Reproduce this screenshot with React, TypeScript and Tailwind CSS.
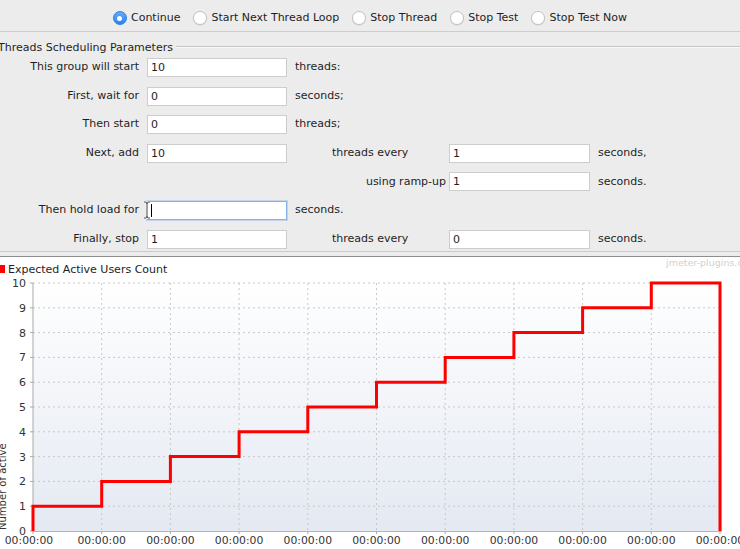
import React from "react";

// radio options on the top bar
const options = [
  { label: "Continue", checked: true },
  { label: "Start Next Thread Loop", checked: false },
  { label: "Stop Thread", checked: false },
  { label: "Stop Test", checked: false },
  { label: "Stop Test Now", checked: false },
];

function Radio({ label, checked }: { label: string; checked: boolean }) {
  return (
    <div className="flex items-center gap-[4px]">
      {checked ? (
        <span className="w-[14px] h-[14px] rounded-full bg-gradient-to-b from-[#63a9fb] to-[#2a83f3] border border-[#2f7fe0] flex items-center justify-center">
          <span className="w-[5px] h-[5px] rounded-full bg-white" />
        </span>
      ) : (
        <span className="w-[14px] h-[14px] rounded-full bg-white border border-[#c4c4c4] shadow-[0_0.5px_1px_rgba(0,0,0,0.12)]" />
      )}
      <span>{label}</span>
    </div>
  );
}

function Field({ value, focused }: { value?: string; focused?: boolean }) {
  return (
    <div
      className={
        "h-[19px] bg-white border px-[3px] leading-[17px] relative " +
        (focused ? "border-[#86b0ea] shadow-[0_0_0_1px_rgba(120,165,230,0.35)]" : "border-[#cdcdcd]")
      }
    >
      {value}
      {focused && (
        <>
          <span className="absolute left-[3px] top-[2px] w-px h-[13px] bg-black" />
          {/* mouse I-beam cursor */}
          <svg className="absolute -left-[5px] -top-[2px]" width="8" height="20" viewBox="0 0 8 20">
            <path d="M1 2 H3 Q4 2 4 4 V16 Q4 18 3 18 H1 M7 2 H5 Q4 2 4 4 M4 16 Q4 18 5 18 H7" fill="none" stroke="#fff" strokeWidth="2.2" />
            <path d="M1 2 H3 Q4 2 4 4 V16 Q4 18 3 18 H1 M7 2 H5 Q4 2 4 4 M4 16 Q4 18 5 18 H7" fill="none" stroke="#444" strokeWidth="1" />
          </svg>
        </>
      )}
    </div>
  );
}

// chart geometry (svg coords, chart starts at page y=257)
const X0 = 33;
const XSTEP = 68.7;
const Y0 = 274;
const YSTEP = 24.8;
const PLOT_RIGHT = 722;

function yOf(v: number) {
  return Y0 - v * YSTEP;
}

function Chart() {
  let d = `M${X0},${Y0} V${yOf(1)}`;
  for (let k = 1; k <= 9; k++) {
    d += ` H${X0 + XSTEP * k} V${yOf(k + 1)}`;
  }
  d += ` H${X0 + XSTEP * 10} V${Y0}`;

  const xs = Array.from({ length: 11 }, (_, i) => X0 + XSTEP * i);
  const ys = Array.from({ length: 11 }, (_, i) => i);

  return (
    <svg width="740" height="292" viewBox="0 0 740 292" className="block">
      <defs>
        <linearGradient id="plotbg" x1="0" y1="0" x2="0" y2="1">
          <stop offset="0" stopColor="#ffffff" />
          <stop offset="1" stopColor="#e4e9f2" />
        </linearGradient>
      </defs>
      <rect x="0" y="0" width="740" height="292" fill="#fff" />
      <text x="666" y="9" fontSize="9.5" fill="#d0d0d0" fontFamily="DejaVu Sans">
        jmeter-plugins.org
      </text>
      <rect x="0" y="8" width="5" height="8" fill="#ff0000" />
      <text x="8" y="15.5" fontSize="11" fill="#1e1e1e" fontFamily="DejaVu Sans">
        Expected Active Users Count
      </text>

      <rect x={X0} y={yOf(10)} width={PLOT_RIGHT - X0} height={Y0 - yOf(10)} fill="url(#plotbg)" />

      {ys.slice(1).map((v) => (
        <line key={"h" + v} x1={X0} x2={PLOT_RIGHT} y1={yOf(v)} y2={yOf(v)} stroke="#c8c8c8" strokeWidth="1" strokeDasharray="2 3" />
      ))}
      {xs.slice(1).map((x, i) => (
        <line key={"v" + i} x1={x} x2={x} y1={yOf(10)} y2={Y0} stroke="#c8c8c8" strokeWidth="1" strokeDasharray="2 3" />
      ))}

      <line x1={X0} x2={X0} y1={yOf(10)} y2={Y0} stroke="#a9a9a9" />
      <line x1={X0} x2={PLOT_RIGHT} y1={Y0 + 0.5} y2={Y0 + 0.5} stroke="#b5b5b5" />
      {ys.map((v) => (
        <line key={"yt" + v} x1={X0 - 3} x2={X0} y1={yOf(v)} y2={yOf(v)} stroke="#a9a9a9" />
      ))}
      {xs.map((x, i) => (
        <line key={"xt" + i} x1={x} x2={x} y1={Y0} y2={Y0 + 3} stroke="#a9a9a9" />
      ))}

      {ys.map((v) => (
        <text key={"yl" + v} x="26" y={yOf(v) + 4} textAnchor="end" fontSize="11" fill="#333" fontFamily="DejaVu Sans">
          {v}
        </text>
      ))}
      {xs.map((x, i) => (
        <text key={"xl" + i} x={i === 0 ? 29 : x} y="287" textAnchor="middle" fontSize="10.8" fill="#333" fontFamily="DejaVu Sans">
          00:00:00
        </text>
      ))}

      <text transform={`translate(5.5,${Y0 - 1}) rotate(-90)`} fontSize="10" fill="#333" fontFamily="DejaVu Sans">
        Number of active
      </text>

      <path d={d} fill="none" stroke="#ff0000" strokeWidth="3" strokeLinejoin="miter" />
    </svg>
  );
}

export default function App() {
  return (
    <div className="w-[740px] h-[549px] overflow-hidden bg-[#ececec] font-['DejaVu_Sans',sans-serif] text-[11px] text-[#1e1e1e]">
      {/* 하단 액션 라디오 */}
      <div className="h-[32px] pt-[5px] flex items-center justify-center gap-[13px] border-b border-[#cdcdcd]">
        {options.map((o) => (
          <Radio key={o.label} label={o.label} checked={o.checked} />
        ))}
      </div>

      {/* Threads Scheduling Parameters */}
      <div className="h-[220px] pt-[9px] border-b border-[#cbcbcb]">
        <div className="flex items-center h-[14px]">
          <span className="-ml-[2px] pr-[3px]">Threads Scheduling Parameters</span>
          <div className="flex-1 border-t border-[#c6c6c6] border-b border-b-[#f8f8f8] mt-[-2px]" />
        </div>

        <div className="mt-[3px] grid grid-cols-[147px_140px_162px_141px_1fr] auto-rows-[19px] gap-y-[9.6px] items-center">
          <span className="pr-[8px] text-right">This group will start</span>
          <Field value="10" />
          <span className="pl-[8px]">threads:</span>
          <span />
          <span />

          <span className="pr-[8px] text-right">First, wait for</span>
          <Field value="0" />
          <span className="pl-[8px]">seconds;</span>
          <span />
          <span />

          <span className="pr-[8px] text-right">Then start</span>
          <Field value="0" />
          <span className="pl-[8px]">threads;</span>
          <span />
          <span />

          <span className="pr-[8px] text-right">Next, add</span>
          <Field value="10" />
          <span className="pl-[45px]">threads every</span>
          <Field value="1" />
          <span className="pl-[8px]">seconds,</span>

          <span />
          <span />
          <span className="pr-[3px] text-right">using ramp-up</span>
          <Field value="1" />
          <span className="pl-[8px]">seconds.</span>

          <span className="pr-[8px] text-right">Then hold load for</span>
          <Field focused />
          <span className="pl-[8px]">seconds.</span>
          <span />
          <span />

          <span className="pr-[8px] text-right">Finally, stop</span>
          <Field value="1" />
          <span className="pl-[45px]">threads every</span>
          <Field value="0" />
          <span className="pl-[8px]">seconds.</span>
        </div>
      </div>

      <div className="h-[4px]" />
      <div className="border-t border-[#8e8e8e]">
        <Chart />
      </div>
    </div>
  );
}
